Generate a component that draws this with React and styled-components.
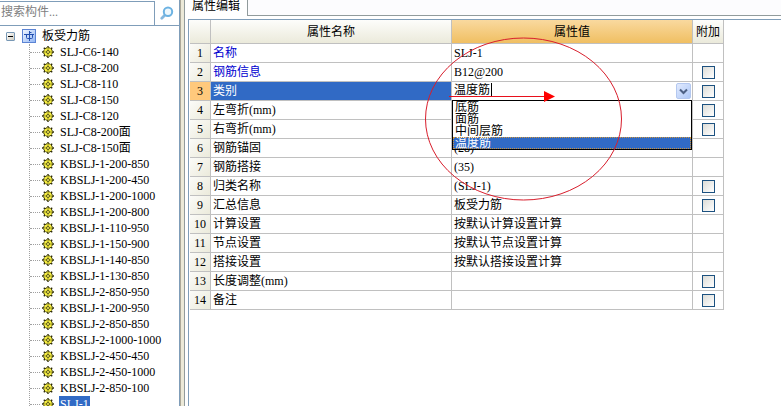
import React, { useState } from 'react';
import styled, { createGlobalStyle } from 'styled-components';

const GlobalStyle = createGlobalStyle`
  * {
    box-sizing: border-box;
  }
  body {
    margin: 0;
    background: #fff;
    color: #000;
    font: 12px/16px "Liberation Serif", "Noto Sans CJK SC", sans-serif;
  }
  input, button {
    font: inherit;
    color: inherit;
    padding: 0;
    margin: 0;
  }
`;

const Window = styled.div`
  display: flex;
  height: 100vh;
  overflow: hidden;
  background: #ece9d8;
`;

const Sidebar = styled.aside`
  display: flex;
  flex-direction: column;
  flex: 0 0 180px;
  min-width: 0;
  border-right: 1px solid #7f9db9;
`;

const SearchBar = styled.form`
  display: flex;
  flex: 0 0 26px;
  background: #fff;
  border-bottom: 1px solid #7f9db9;
`;

const SearchInput = styled.input`
  flex: 1;
  min-width: 0;
  margin-top: 1px;
  border: 1px solid #7f9db9;
  border-width: 1px 1px 0 0;
  background: #fff;
  outline: none;
  padding: 0 0 4px 1px;
  &::placeholder {
    color: #808080;
    opacity: 1;
  }
`;

const SearchButton = styled.button`
  display: flex;
  align-items: center;
  justify-content: center;
  width: 24px;
  border: 0;
  background: #fff;
`;

const Tree = styled.ul`
  flex: 1;
  margin: 0;
  padding: 2px 0 0;
  list-style: none;
  overflow: hidden;
  background: #fff;
`;

const Branch = styled.ul`
  margin: 0 0 0 29px;
  padding: 0;
  list-style: none;
  border-left: 1px dotted #a0a0a0;
`;

const Node = styled.li`
  display: flex;
  align-items: center;
  height: 16px;
  white-space: nowrap;
`;

const Root = styled(Node)`
  padding-left: 6px;
`;

const Toggle = styled.button`
  display: flex;
  align-items: center;
  justify-content: center;
  width: 9px;
  height: 9px;
  margin-right: 7px;
  border: 1px solid #7898b5;
  border-radius: 1px;
  background: linear-gradient(135deg, #fff, #d0ccc0);
  &::before {
    content: "";
    width: 5px;
    height: 1px;
    background: #000;
  }
`;

const Connector = styled.span`
  width: 10px;
  margin-right: 2px;
  border-top: 1px dotted #a0a0a0;
`;

const Label = styled.span`
  height: 16px;
  margin-left: 5px;
  padding: 0 1px;
  background: ${props => (props.$selected ? '#316ac5' : 'transparent')};
  color: ${props => (props.$selected ? '#fff' : '#000')};
`;

const Splitter = styled.div`
  flex: 0 0 4px;
  background: #ece9d8;
  border-left: 1px solid #aca899;
`;

const Editor = styled.main`
  display: flex;
  flex-direction: column;
  flex: 1;
  min-width: 0;
  background: #fff;
  border-left: 1px solid #919b9c;
`;

const TabBar = styled.div`
  display: flex;
  height: 16px;
  &::after {
    content: "";
    flex: 1;
    background: #fcfcfe;
    border-bottom: 1px solid #919b9c;
  }
`;

const Tab = styled.button`
  width: 63px;
  height: 16px;
  padding: 0 0 4px;
  line-height: 12px;
  border: 0;
  border-right: 1px solid #919b9c;
  background: #fff;
`;

const Sheet = styled.div`
  position: relative;
  flex: 1;
  margin: 3px 0 0 3px;
  border: 1px solid #7f9db9;
  border-width: 1px 0 0 1px;
  padding-left: 1px;
`;

const Grid = styled.table`
  table-layout: fixed;
  width: 534px;
  border-spacing: 0;
`;

const HeadCell = styled.th`
  height: 24px;
  padding: 0;
  font-weight: normal;
  border-right: 1px solid #c0c0c0;
  border-bottom: 1px solid #c0c0c0;
  background: ${props =>
    props.$active
      ? 'linear-gradient(#f9d99f, #f0bf62)'
      : 'linear-gradient(#fdfdfb, #ebeadb)'};
`;

const RowHead = styled.th`
  height: 19px;
  padding: 0;
  font-weight: normal;
  border-right: 1px solid #c0c0c0;
  border-bottom: 1px solid #c0c0c0;
  background: ${props =>
    props.$active ? '#ffc97c' : 'linear-gradient(135deg, #fbfbf8, #ebeadb)'};
`;

const Cell = styled.td`
  height: 19px;
  padding: 0 0 0 2px;
  white-space: nowrap;
  border-right: 1px solid #c0c0c0;
  border-bottom: 1px solid #c0c0c0;
  background: ${props => (props.$selected ? '#316ac5' : '#fff')};
  color: ${props => (props.$selected ? '#fff' : props.$required ? '#0000d0' : '#000')};
`;

const CheckCell = styled(Cell)`
  padding: 0;
`;

const Check = styled.input`
  appearance: none;
  display: block;
  width: 13px;
  height: 13px;
  margin: 1px auto 0;
  border: 1px solid #1c5180;
  background: linear-gradient(135deg, #dcdcd7, #fff);
  &:checked {
    background: #1c5180;
  }
`;

const Combo = styled.div`
  position: relative;
  display: flex;
  height: 18px;
`;

const ComboInput = styled.input`
  width: 38px;
  height: 14px;
  margin-top: 1px;
  border: 0;
  border-right: 1px solid #000;
  outline: none;
  background: #fff;
`;

const ComboButton = styled.button`
  display: flex;
  align-items: center;
  justify-content: center;
  width: 15px;
  height: 16px;
  margin: 1px 1px 1px auto;
  border: 1px solid #b4c8f0;
  border-radius: 2px;
  background: linear-gradient(135deg, #e1eafe, #aec8f7);
`;

const Options = styled.ul`
  position: absolute;
  top: 18px;
  left: -2px;
  right: 0;
  z-index: 1;
  margin: 0;
  padding: 0;
  list-style: none;
  border: 1px solid #000;
  background: #fff;
`;

const Option = styled.li`
  height: 12px;
  padding-left: 2px;
  line-height: 12px;
  background: ${props => (props.$selected ? '#316ac5' : '#fff')};
  color: ${props => (props.$selected ? '#fff' : '#000')};
  outline: ${props => (props.$selected ? '1px dotted #ce953a' : 'none')};
  outline-offset: -1px;
`;

const Markup = styled.svg`
  position: absolute;
  top: 17px;
  left: 236px;
  z-index: 2;
  pointer-events: none;
`;

const bars = [
  'SLJ-C6-140',
  'SLJ-C8-200',
  'SLJ-C8-110',
  'SLJ-C8-150',
  'SLJ-C8-120',
  'SLJ-C8-200面',
  'SLJ-C8-150面',
  'KBSLJ-1-200-850',
  'KBSLJ-1-200-450',
  'KBSLJ-1-200-1000',
  'KBSLJ-1-200-800',
  'KBSLJ-1-110-950',
  'KBSLJ-1-150-900',
  'KBSLJ-1-140-850',
  'KBSLJ-1-130-850',
  'KBSLJ-2-850-950',
  'KBSLJ-1-200-950',
  'KBSLJ-2-850-850',
  'KBSLJ-2-1000-1000',
  'KBSLJ-2-450-450',
  'KBSLJ-2-450-1000',
  'KBSLJ-2-850-100',
  'SLJ-1',
];

const properties = [
  { name: '名称', value: 'SLJ-1', required: true },
  { name: '钢筋信息', value: 'B12@200', required: true, extra: true },
  { name: '类别', editing: true, extra: true },
  { name: '左弯折(mm)', value: '', extra: true },
  { name: '右弯折(mm)', value: '', extra: true },
  { name: '钢筋锚固', value: '(28)' },
  { name: '钢筋搭接', value: '(35)' },
  { name: '归类名称', value: '(SLJ-1)', extra: true },
  { name: '汇总信息', value: '板受力筋', extra: true },
  { name: '计算设置', value: '按默认计算设置计算' },
  { name: '节点设置', value: '按默认节点设置计算' },
  { name: '搭接设置', value: '按默认搭接设置计算' },
  { name: '长度调整(mm)', value: '', extra: true },
  { name: '备注', value: '', extra: true },
];

const categories = ['底筋', '面筋', '中间层筋', '温度筋'];

const SearchIcon = () => (
  <svg width="14" height="14" viewBox="0 0 14 14">
    <path d="M1.8 12.2 L5.2 8.8" stroke="#86b8de" strokeWidth="2.8" strokeLinecap="round" />
    <circle cx="8" cy="5.8" r="4.2" fill="#eef8fd" stroke="#6cb2e2" strokeWidth="2" />
  </svg>
);

const SlabIcon = () => (
  <svg width="14" height="14" viewBox="0 0 14 14">
    <defs>
      <linearGradient id="slab" x1="0" y1="0" x2="1" y2="1">
        <stop offset="0" stopColor="#f4f9ff" />
        <stop offset="1" stopColor="#8fb4f4" />
      </linearGradient>
    </defs>
    <rect x="0.5" y="0.5" width="13" height="13" fill="url(#slab)" stroke="#5c84d4" />
    <path d="M2 5.5h10M7.5 2v10" fill="none" stroke="#2450b0" />
    <path d="M4.5 5.5v3q0 1 1 1h4q1 0 1-1v-3M7.5 3.5h2" fill="none" stroke="#2450b0" />
  </svg>
);

const BarIcon = () => (
  <svg width="12" height="12" viewBox="0 0 12 12">
    <path d="M6 0v12M0 6h12M1.8 1.8l8.4 8.4M10.2 1.8l-8.4 8.4" stroke="#2c2a08" strokeWidth="1.4" />
    <circle cx="6" cy="6" r="4.4" fill="#f8f040" stroke="#3c3a0c" strokeDasharray="2.4 1" />
    <path d="M6 2v8M2 6h8" stroke="#6c681c" strokeWidth="0.7" />
    <circle cx="6" cy="6" r="1.5" fill="#fcf460" stroke="#3c3a0c" strokeWidth="0.8" />
  </svg>
);

const ChevronIcon = () => (
  <svg width="9" height="7" viewBox="0 0 9 7">
    <path d="M1 1.5l3.5 3.5L8 1.5" fill="none" stroke="#4d6185" strokeWidth="2" />
  </svg>
);

const CategoryCombo = () => {
  const [value, setValue] = useState('温度筋');
  const [open, setOpen] = useState(true);
  return (
    <Combo>
      <ComboInput
        role="combobox"
        aria-label="类别"
        aria-expanded={open}
        aria-controls="categories"
        value={value}
        onChange={e => setValue(e.target.value)}
      />
      <ComboButton type="button" aria-label="展开" onClick={() => setOpen(!open)}>
        <ChevronIcon />
      </ComboButton>
      {open && (
        <Options id="categories" role="listbox">
          {categories.map(item => (
            <Option
              key={item}
              role="option"
              aria-selected={item === value}
              $selected={item === value}
              onClick={() => setValue(item)}
            >
              {item}
            </Option>
          ))}
        </Options>
      )}
    </Combo>
  );
};

const App = () => {
  const [selected, setSelected] = useState('SLJ-1');
  return (
    <Window>
      <GlobalStyle />
      <Sidebar>
        <SearchBar onSubmit={e => e.preventDefault()}>
          <SearchInput aria-label="搜索构件" placeholder="搜索构件..." />
          <SearchButton aria-label="搜索">
            <SearchIcon />
          </SearchButton>
        </SearchBar>
        <Tree>
          <Root>
            <Toggle type="button" aria-label="折叠" />
            <SlabIcon />
            <Label>板受力筋</Label>
          </Root>
          <li>
            <Branch>
              {bars.map(bar => (
                <Node key={bar} onClick={() => setSelected(bar)}>
                  <Connector />
                  <BarIcon />
                  <Label $selected={bar === selected}>{bar}</Label>
                </Node>
              ))}
            </Branch>
          </li>
        </Tree>
      </Sidebar>
      <Splitter />
      <Editor>
        <TabBar>
          <Tab type="button">属性编辑</Tab>
        </TabBar>
        <Sheet>
          <Grid>
            <colgroup>
              <col width="21" />
              <col width="241" />
              <col width="241" />
              <col width="31" />
            </colgroup>
            <thead>
              <tr>
                <HeadCell />
                <HeadCell>属性名称</HeadCell>
                <HeadCell $active>属性值</HeadCell>
                <HeadCell>附加</HeadCell>
              </tr>
            </thead>
            <tbody>
              {properties.map((row, i) => (
                <tr key={row.name}>
                  <RowHead scope="row" $active={row.editing}>{i + 1}</RowHead>
                  <Cell $required={row.required} $selected={row.editing}>{row.name}</Cell>
                  <Cell>{row.editing ? <CategoryCombo /> : row.value}</Cell>
                  <CheckCell>
                    {row.extra && <Check type="checkbox" aria-label={`${row.name} 附加`} />}
                  </CheckCell>
                </tr>
              ))}
            </tbody>
          </Grid>
          <Markup width="200" height="166" viewBox="0 0 200 166">
            <ellipse cx="98.5" cy="82" rx="98" ry="81" fill="none" stroke="#d81e2c" />
            <path d="M24 59.5h96" stroke="#e8101c" />
            <path d="M119 54v11l11-5.5z" fill="#f00" />
          </Markup>
        </Sheet>
      </Editor>
    </Window>
  );
};

export default App;
